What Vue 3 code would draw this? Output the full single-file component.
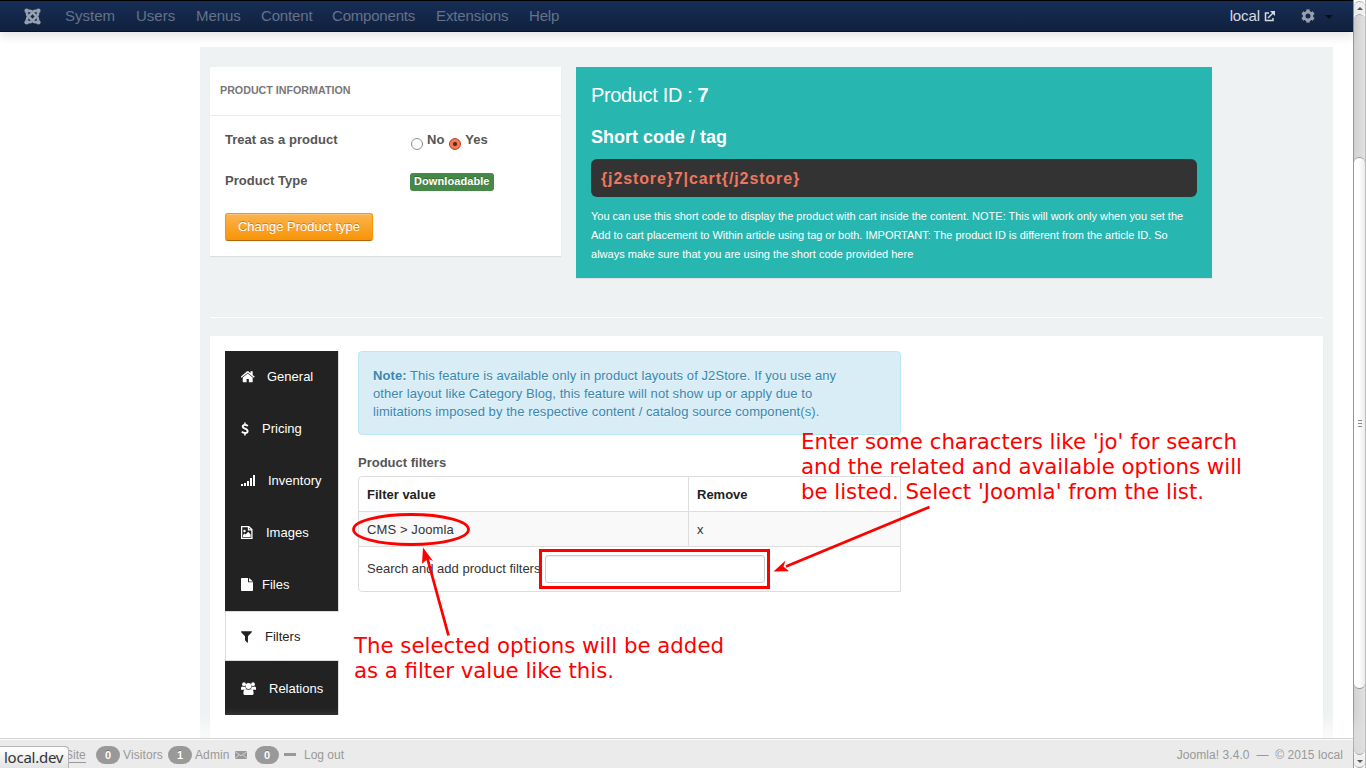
<script setup>
const menu = [
  { name: 'System', w: 71, s: 0 },
  { name: 'Users', w: 60, s: 0 },
  { name: 'Menus', w: 65, s: -0.05 },
  { name: 'Content', w: 71, s: -0.15 },
  { name: 'Components', w: 104, s: -0.2 },
  { name: 'Extensions', w: 93, s: -0.1 },
  { name: 'Help', w: 40, s: -0.2 }
]
const tabs = [
  { name: 'General', icon: 'home', x: 42 },
  { name: 'Pricing', icon: 'dollar', x: 37 },
  { name: 'Inventory', icon: 'signal', x: 43 },
  { name: 'Images', icon: 'image', x: 41 },
  { name: 'Files', icon: 'file', x: 37 },
  { name: 'Filters', icon: 'filter', x: 40, active: true },
  { name: 'Relations', icon: 'group', x: 44 }
]
</script>

<template>
  <div class="screen">
    <div class="window">
      <header class="navbar">
        <svg class="logo" width="17" height="17" viewBox="0 0 17 17" fill="none" stroke="#98a0b0">
          <g stroke-width="2.500">
            <path d="M3 4.500v1.500q0 1 1 2l5.500 5.500q1.500 1.500 3.500 0" />
            <path d="M14 4.500v1.500q0 1-1 2l-5.500 5.500q-1.500 1.500-3.500 0" />
            <path d="M3 12.500v-1.500q0-1 1-2l5.500-5.500q1.500-1.500 3.500 0" />
            <path d="M14 12.500v-1.500q0-1-1-2l-5.500-5.500q-1.500-1.500-3.500 0" />
          </g>
          <g fill="#98a0b0" stroke="none">
            <circle cx="2.700" cy="2.700" r="2.300" /><circle cx="14.300" cy="2.700" r="2.300" />
            <circle cx="2.700" cy="14.300" r="2.300" /><circle cx="14.300" cy="14.300" r="2.300" />
          </g>
        </svg>
        <nav><a v-for="m in menu" :key="m.name" :style="{ width: m.w + 'px', letterSpacing: m.s + 'px' }">{{ m.name }}</a></nav>
        <div class="right">
          <span class="site">local</span>
          <svg class="ext" width="11" height="11" viewBox="0 0 11 11" fill="none" stroke="#d6dae2" stroke-width="1.500">
            <path d="M5 2H1.500v7.500H9V7" /><path d="M4 7L9 2" /><path d="M6 0h5v5z" fill="#d6dae2" stroke="none" />
          </svg>
          <svg class="gear" width="14" height="14" viewBox="-7 -7 14 14">
            <g fill="#98a0b0">
              <rect v-for="a in [0, 60, 120]" :key="a" x="-1.700" y="-6.600" width="3.400" height="13.200" :transform="`rotate(${a})`" />
            </g>
            <circle r="3.900" fill="none" stroke="#98a0b0" stroke-width="2.700" />
            <circle r="2.500" fill="#14274a" />
          </svg>
          <i class="caret"></i>
        </div>
      </header>

      <main class="content">
        <div class="panel">
          <div class="top">
            <section class="card">
              <h3>PRODUCT INFORMATION</h3>
              <div class="line treat">
                <b>Treat as a product</b>
                <i class="radio"></i><b class="no">No</b><i class="radio on"></i><b>Yes</b>
              </div>
              <div class="line type"><b>Product Type</b><span class="label">Downloadable</span></div>
              <button class="change">Change Product type</button>
            </section>
            <section class="teal">
              <div class="pid">Product ID : <b>7</b></div>
              <div class="short">Short code / tag</div>
              <div class="code">{j2store}7|cart{/j2store}</div>
              <p><span class="t1">You can use this short code to display the product with cart inside the content. NOTE: This will work only when you set the</span><br><span class="t2">Add to cart placement to Within article using tag or both. IMPORTANT: The product ID is different from the article ID. So</span><br><span class="t3">always make sure that you are using the short code provided here</span></p>
            </section>
          </div>
          <div class="rule"></div>
          <div class="box">
            <ul class="tabs">
              <li v-for="t in tabs" :key="t.name" :class="{ active: t.active }">
                <span class="ic" :style="{ width: t.x - 16 + 'px' }">
                  <svg v-if="t.icon === 'home'" width="14" height="14" viewBox="120 120 1620 1620"><path d="M1472 992v480q0 26-19 45t-45 19h-384v-384h-256v384h-384q-26 0-45-19t-19-45v-480q0-1 .5-3t.5-3l575-474 575 474q1 2 1 6zm223-69l-62 74q-8 9-21 11h-3q-13 0-21-7l-692-577-692 577q-12 8-24 7-13-2-21-11l-62-74q-8-10-7-23.500t11-21.500l719-599q32-26 76-26t76 26l244 204v-195q0-14 9-23t23-9h192q14 0 23 9t9 23v408l219 182q10 8 11 21.500t-7 23.500z" /></svg>
                  <svg v-else-if="t.icon === 'dollar'" width="8" height="14" viewBox="0 0 8 14"><path d="M6.800 4Q5.600 2.900 4 2.900 1.700 2.900 1.700 4.600 1.700 5.900 4 6.600 6.600 7.400 6.600 9.200 6.600 11 4 11 2.100 11 .8 9.700" fill="none" stroke="currentColor" stroke-width="1.900" /><path d="M3.200 .5h1.500v2.200H3.200zM3.200 11h1.500v2.500H3.200z" /></svg>
                  <svg v-else-if="t.icon === 'signal'" width="14" height="14" viewBox="0 0 14 14"><path d="M0 10h2v2H0zM3 9h2v3H3zM6 7h2v5H6zM9 4h2v8H9zM12 1h2v11h-2z" /></svg>
                  <svg v-else-if="t.icon === 'image'" width="12" height="14" viewBox="0 0 12 14"><path d="M.6 .6h7.200l3.100 3v8.800H.6zM7.500 .6v3.300h3.400" fill="none" stroke="currentColor" stroke-width="1.300" /><circle cx="3.500" cy="5" r="1.200" /><path d="M2 10.900V9L3.500 7.500l1.200 1.100L7.200 5.800 9.600 8.500v2.400z" /></svg>
                  <svg v-else-if="t.icon === 'file'" width="12" height="14" viewBox="0 0 12 14"><path d="M0 .8Q0 0 .8 0H7v4.300h5v8q0 .8-.8.800H.8Q0 13.100 0 12.300zM8 0L12 3.500H8z" /></svg>
                  <svg v-else-if="t.icon === 'filter'" width="11" height="13" viewBox="190 100 1420 1600" preserveAspectRatio="none"><path d="M1595 295q17 41-14 70l-493 493v742q0 42-39 59-13 5-25 5-27 0-45-19l-256-256q-19-19-19-45v-486l-493-493q-31-29-14-70 17-39 59-39h1280q42 0 59 39z" /></svg>
                  <svg v-else width="15" height="14" viewBox="0 0 15 14"><circle cx="3" cy="2.200" r="1.900" /><circle cx="12" cy="2.200" r="1.900" /><circle cx="7.500" cy="4" r="2.900" /><path d="M0 7.700V6Q0 4.300 1.400 4.400q1.600.7 3 .1-.1 1.500.9 2.600Q3.800 6.900 3 7.700zM15 7.700V6Q15 4.300 13.600 4.400q-1.600.7-3 .1.100 1.500-.9 2.600 1.500-.2 2.300.6zM4.600 6.900q2.900 1.600 5.800 0 2.200.2 2.200 4.500 0 1.700-1.600 1.700H4q-1.600 0-1.600-1.700 0-4.300 2.200-4.500z" /></svg>
                </span>{{ t.name }}
              </li>
            </ul>
            <div class="pane">
              <div class="alert"><b>Note:</b> This feature is available only in product layouts of J2Store. If you use any<br>other layout like Category Blog, this feature will not show up or apply due to<br>limitations imposed by the respective content / catalog source component(s).</div>
              <div class="title">Product filters</div>
              <div class="table">
                <div class="tr head"><div class="c1">Filter value</div><div class="c2">Remove</div></div>
                <div class="tr odd"><div class="c1">CMS &gt; Joomla</div><div class="c2">x</div></div>
                <div class="tr last"><span>Search and add product filters</span><input class="search"></div>
              </div>
            </div>
          </div>
        </div>
      </main>

      <footer class="status">
        <span class="view">Site</span>
        <span class="badge b1">0</span><span class="visitors">Visitors</span>
        <span class="badge">1</span><span class="admin">Admin</span>
        <svg class="mail" width="12" height="8" viewBox="0 0 12 8"><path d="M0 0h12v8H0z" fill="#999" /><path d="M0 .5l6 4.300L12 .5M0 7.500l4-3.700M12 7.500L8 3.800" fill="none" stroke="#ebebeb" stroke-width=".7" /></svg>
        <span class="badge">0</span><i class="dash"></i><span>Log out</span>
        <span class="copy">Joomla! 3.4.0&nbsp; —&nbsp; © 2015 local</span>
      </footer>
    </div>

    <aside class="scroll">
      <div class="btn up"><i></i></div>
      <div class="track">
        <div class="thumb"><i></i><i></i><i></i></div>
      </div>
      <div class="btn down"><i></i></div>
    </aside>

    <div class="link">local.dev</div>

    <svg class="notes" width="1366" height="768" fill="none" stroke="#f00">
      <ellipse cx="411" cy="529.500" rx="57.500" ry="15" stroke-width="2.800" />
      <rect x="540.500" y="550.500" width="228" height="37" stroke-width="3" />
      <path d="M448.500 635.500L427 557M929.500 507L786 566.500" stroke-width="2.800" />
      <g fill="#f00" stroke="none">
        <path d="M423 547.500l10 13.500-5-2.300-6 5z" /><path d="M773.500 571.500l12-11-2 6 5.500 4.800z" />
        <g class="anno">
          <text x="801" y="449" textLength="436">Enter some characters like 'jo' for search</text>
          <text x="801" y="474" textLength="441">and the related and available options will</text>
          <text x="801" y="499" textLength="403">be listed. Select 'Joomla' from the list.</text>
          <text x="354" y="653" textLength="370">The selected options will be added</text>
          <text x="354" y="678" textLength="260">as a filter value like this.</text>
        </g>
      </g>
    </svg>
  </div>
</template>

<style>
html, body { margin: 0; overflow: hidden; }
</style>

<style scoped>
* { box-sizing: border-box; }
.screen { position: relative; display: flex; width: 1366px; height: 768px; overflow: hidden; background: #fff; font: 13px/18px "Liberation Sans", Arial, sans-serif; color: #333; white-space: nowrap; }
.window { width: 1353px; display: flex; flex-direction: column; }
.navbar { position: relative; z-index: 2; height: 32px; flex: none; display: flex; align-items: center; padding-left: 24px; border-top: 1px solid #000; border-bottom: 1px solid #06152d; background: linear-gradient(#172d56, #10213d); box-shadow: 0 5px 10px rgba(0,0,0,.1); font-size: 15px; color: #66718a; }
.logo { margin-right: 24px; }
nav { display: flex; }
.right { margin-left: auto; display: flex; align-items: center; }
.site { color: #d6dae2; margin-right: 4px; letter-spacing: -.1px; }
.gear { margin: 0 10px 0 26px; }
.caret { border: 4px solid transparent; border-top-color: #060e1c; border-bottom: 0; margin: 2px 20px 0 0; }
.content { flex: 1; display: flex; padding: 15px 20px 0 200px; min-height: 0; }
.panel { flex: 1; background: #eef2f3; padding: 20px 10px 0; display: flex; flex-direction: column; }
.top { display: flex; gap: 15px; height: 211px; align-items: flex-start; }
.card { width: 351px; height: 189px; background: #fff; box-shadow: 0 1px 1px rgba(0,0,0,.08); color: #555; }
.card h3 { margin: 0 0 15px; height: 49px; padding: 0 10px; border-bottom: 1px solid #eaedee; font-size: 10.700px; line-height: 47px; color: #777; }
.line { display: flex; padding-left: 15px; height: 18px; }
.line > b:first-child { width: 185px; letter-spacing: .03px; }
.type { margin-top: 23px; align-items: center; }
.radio { width: 12px; height: 12px; margin: 7px 4px 0 1px; border: 1px solid #8f8f8f; border-radius: 50%; background: #fff; }
.no { margin-right: 4px; }
.radio.on { border-color: #a8452a; background: radial-gradient(circle, #5e2b1c 0 1.700px, #f47b51 2.500px); margin-right: 4px; }
.label { background: #468847; color: #fff; font-weight: bold; font-size: 11px; line-height: 17px; height: 18px; padding: 0 4px; border-radius: 3px; margin-top: 2px; width: 84px; text-shadow: 0 -1px 0 rgba(0,0,0,.25); letter-spacing: .08px; }
.change { display: block; margin: 23px 0 0 15px; width: 148px; height: 28px; padding: 0; border: 1px solid #f89406; border-bottom-color: #ad6704; border-radius: 3px; background: linear-gradient(#fbb450, #f89406); color: #fff; font: 13px/24px "Liberation Sans", Arial, sans-serif; text-shadow: 0 -1px 0 rgba(0,0,0,.25); box-shadow: inset 0 1px 0 rgba(255,255,255,.2), 0 1px 2px rgba(0,0,0,.05); }
.teal { width: 636px; height: 211px; background: #27b6b0; color: #fff; padding: 15px 15px 0; box-shadow: 0 1px 1px rgba(0,0,0,.06); }
.pid { font-size: 20px; line-height: 26px; letter-spacing: -.35px; }
.short { font-size: 18px; line-height: 24px; font-weight: bold; margin-top: 17px; }
.code { margin-top: 10px; height: 38px; border-radius: 6px; background: #333; color: #ee7760; padding-left: 10px; font-weight: bold; font-size: 16px; line-height: 39px; letter-spacing: .88px; }
.teal p { margin: 10px 0 0; font-size: 11px; line-height: 19px; }
.t1 { letter-spacing: -.008px; }
.t2 { letter-spacing: -.033px; }
.t3 { letter-spacing: .01px; }
.rule { height: 1px; background: #fff; margin-top: 39px; margin-bottom: 18px; flex: none; }
.box { flex: 1; background: #fff; padding: 15px; display: flex; gap: 20px; box-shadow: 0 1px 1px rgba(0,0,0,.05); }
.tabs { list-style: none; margin: 0; padding: 0; width: 113px; height: 364px; background: #222; color: #fff; box-shadow: 1px 0 #ddd; }
.tabs li { height: 52px; display: flex; align-items: center; padding-left: 16px; }
.tabs svg { display: block; fill: currentColor; }
.tabs .active { background: #fff; color: #222; height: 50px; margin-bottom: 2px; border: 1px solid #ddd; border-right: 0; padding: 1px 0 0 15px; width: 114px; }
.pane { width: 543px; }
.alert { height: 84px; padding: 15px 14px; background: #d9edf7; border: 1px solid #bce8f1; border-radius: 4px; color: #3a87ad; text-shadow: 0 1px 0 rgba(255,255,255,.5); letter-spacing: .073px; }
.title { margin-top: 19px; height: 22px; font-weight: bold; color: #555; }
.table { border: 1px solid #ddd; border-radius: 4px 0 0 4px; height: 116px; }
.tr { display: flex; height: 35px; line-height: 34px; border-bottom: 1px solid #ddd; }
.c1 { width: 330px; padding-left: 8px; border-right: 1px solid #ddd; }
.c2 { padding-left: 8px; }
.head { font-weight: bold; color: #222; line-height: 36px; }
.odd { background: #f9f9f9; line-height: 36px; letter-spacing: .1px; }
.last { height: 44px; border: 0; align-items: center; padding-left: 8px; }
.last span { width: 178px; }
.search { width: 220px; height: 28px; border: 1px solid #ccc; border-radius: 3px; box-shadow: inset 0 1px 1px rgba(0,0,0,.075); }
.status { position: relative; height: 30px; flex: none; display: flex; align-items: center; background: #ebebeb; border-top: 1px solid #d4d4d4; box-shadow: inset 0 1px 0 rgba(255,255,255,.8), 0 -15px 15px rgba(255,255,255,.6); color: #999; font-size: 12px; padding: 3px 10px 0 65px; }
.view { line-height: 14px; border-bottom: 1px solid #999; width: 21px; }
.badge { width: 24px; height: 18px; border-radius: 9px; background: #999; color: #fff; font-weight: bold; font-size: 11px; text-align: center; text-shadow: 0 -1px 0 rgba(0,0,0,.25); }
.b1 { margin-left: 10px; }
.visitors { margin-left: 3px; width: 45px; letter-spacing: .1px; }
.admin { margin-left: 3px; width: 40px; letter-spacing: .1px; }
.mail { margin-right: 8px; }
.dash { width: 12px; height: 3px; background: #999; margin: -2px 8px 0 5px; }
.copy { margin-left: auto; letter-spacing: .07px; }
.scroll { width: 13px; padding-top: 1px; border-left: 1px solid #969696; border-right: 1px solid #bbb; background: #fff; display: flex; flex-direction: column; }
.btn { height: 13px; display: flex; justify-content: center; align-items: center; background: #f0f0ef; }
.up { border-radius: 6px 6px 0 0; border-top: 1px solid #aaa; }
.down { border-radius: 0 0 6px 6px; border-bottom: 1px solid #aaa; }
.up i { border: 3px solid transparent; border-top: 0; border-bottom-color: #555; }
.down i { border: 3px solid transparent; border-bottom: 0; border-top-color: #555; }
.track { flex: 1; background: linear-gradient(90deg, #d3d1cf, #e2e1df); border: 1px solid #a9a7a5; border-width: 1px 0; border-radius: 6px; padding-top: 142px; }
.thumb { height: 532px; border-radius: 6px; background: linear-gradient(90deg, #fff 40%, #ececec); border: 1px solid #999; border-width: 1px 0; display: flex; flex-direction: column; align-items: center; justify-content: center; gap: 2px; }
.thumb i { width: 4px; height: 1px; background: #888; }
.link { position: absolute; left: 0; bottom: 0; width: 69px; height: 22px; border: 1px solid #b5b5b5; border-left: 0; border-bottom: 0; border-radius: 0 4px 0 0; background: linear-gradient(#fff, #e3e3e3); padding-left: 4px; font: 15px/21px "Noto Sans", sans-serif; letter-spacing: -.25px; color: #333; }
.notes { position: absolute; left: 0; top: 0; }
.anno { font: 21.300px "DejaVu Sans", sans-serif; }
</style>
